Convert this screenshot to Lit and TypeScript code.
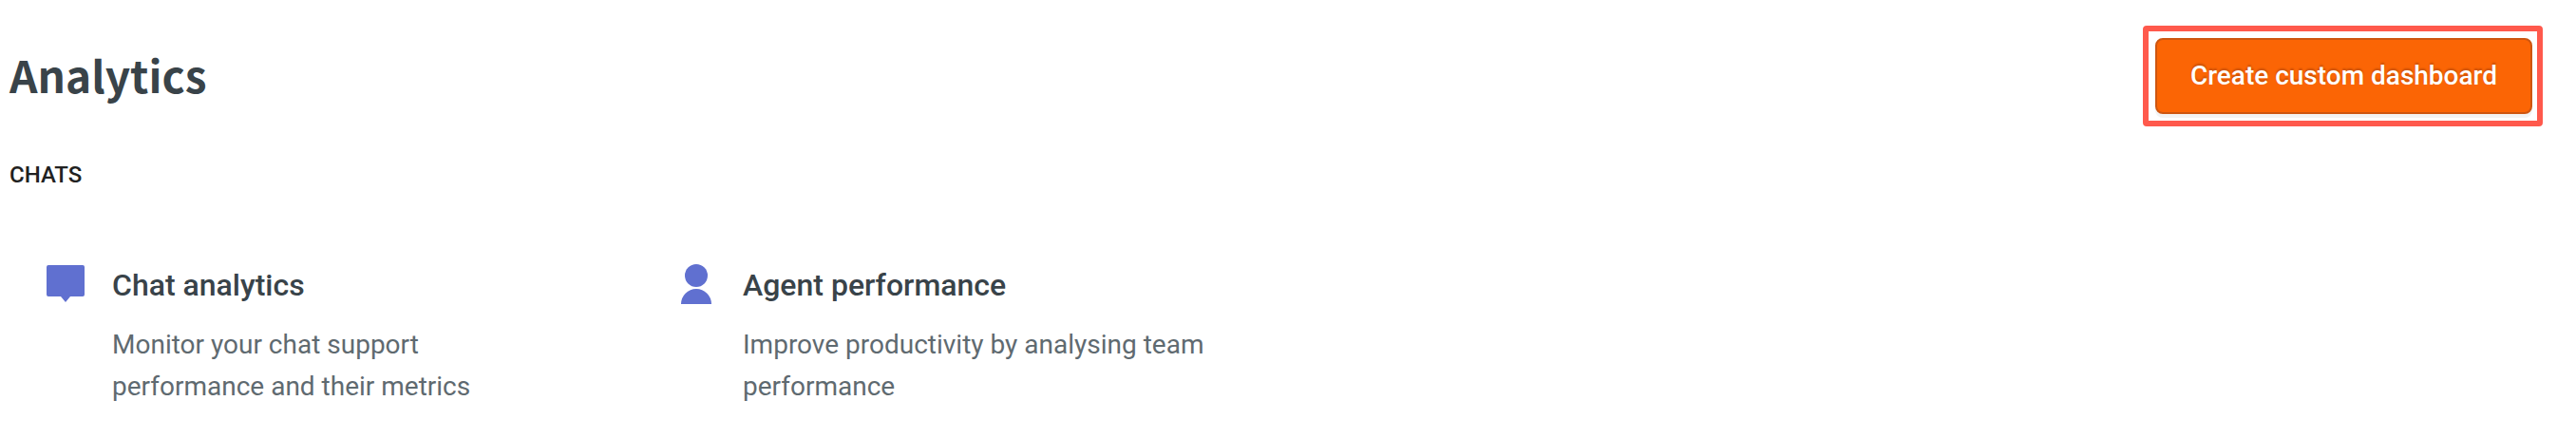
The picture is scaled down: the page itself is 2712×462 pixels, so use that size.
import { LitElement, html, css, svg } from "lit";
import { customElement } from "lit/decorators.js";

const chatIcon = svg`<path d="M3 1H39Q41 1 41 3V32Q41 34 39 34H26L21 40L16 34H3Q1 34 1 32V3Q1 1 3 1Z"/>`;
const agentIcon = svg`<circle cx="21" cy="12" r="12"/><path d="M5 42A16 16 0 0 1 37 42Z"/>`;

const reports = [
  { icon: chatIcon, title: "Chat analytics", text: "Monitor your chat support performance and their metrics" },
  { icon: agentIcon, title: "Agent performance", text: "Improve productivity by analysing team performance" },
];

@customElement("app-root")
export class AppRoot extends LitElement {
  static styles = css`
    :host {
      display: block;
      background: #fff;
      color: #394349;
      font-family: Roboto, "Liberation Sans", sans-serif;
    }
    h1, h2, h3, p { margin: 0; }
    .header {
      display: flex;
      justify-content: space-between;
      align-items: center;
      padding: 27px 35px 0 10px;
    }
    .title {
      padding-bottom: 4px;
      font: 700 46px/64px "Noto Sans CJK JP", "Noto Sans", sans-serif;
    }
    .highlight {
      border: 6px solid #ff594c;
      border-radius: 4px;
      padding: 7px 5px 7px 7px;
    }
    .create {
      display: block;
      height: 80px;
      padding: 0 35px;
      border: 2px solid #ce5610;
      border-radius: 8px;
      background: #fb6505;
      box-shadow: 0 4px 0 #f3f3f3;
      color: #fff;
      font: 500 28px/40px Roboto, "Liberation Sans", sans-serif;
      text-shadow: 0 -2px 2px rgba(0, 0, 0, 0.2);
      cursor: pointer;
    }
    .section {
      padding: 35px 10px 0;
      color: #212121;
      font-size: 24px;
      line-height: 32px;
      font-weight: 500;
    }
    .reports {
      display: flex;
      flex-wrap: wrap;
      gap: 40px 106px;
      padding: 78px 48px 24px;
    }
    .report {
      display: flex;
      gap: 28px;
    }
    .icon {
      width: 42px;
      height: 42px;
      fill: #6070d0;
      flex: none;
    }
    .body { width: 488px; }
    .name {
      font-size: 32px;
      line-height: 44px;
      font-weight: 500;
    }
    .text {
      padding-top: 19px;
      color: #5f6a70;
      font-size: 28px;
      line-height: 44px;
    }
  `;

  render() {
    return html`
      <header class="header">
        <h1 class="title">Analytics</h1>
        <div class="highlight">
          <button class="create" type="button">Create custom dashboard</button>
        </div>
      </header>
      <section>
        <h2 class="section">CHATS</h2>
        <div class="reports">
          ${reports.map((r) => html`
            <article class="report">
              <svg class="icon" viewBox="0 0 42 42" aria-hidden="true">${r.icon}</svg>
              <div class="body">
                <h3 class="name">${r.title}</h3>
                <p class="text">${r.text}</p>
              </div>
            </article>`)}
        </div>
      </section>
    `;
  }
}
